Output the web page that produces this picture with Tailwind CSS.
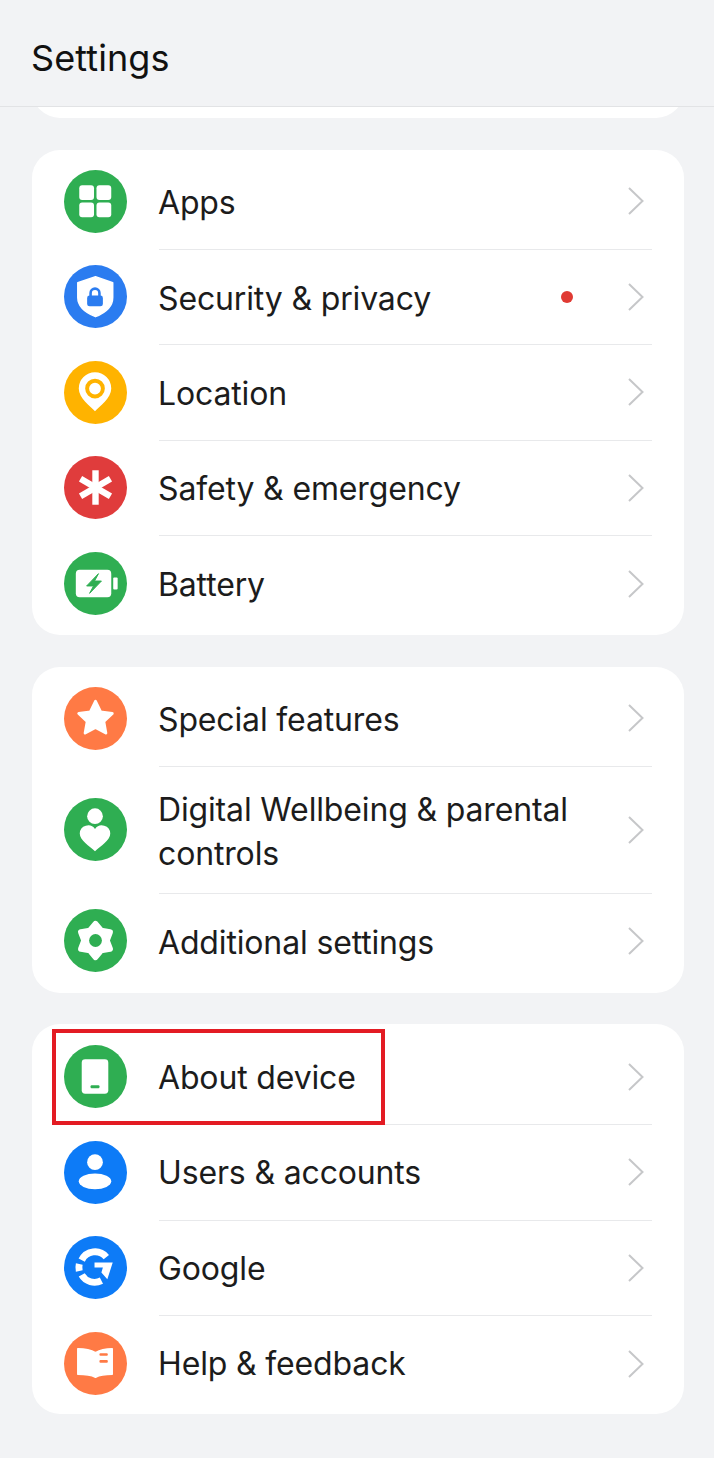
<!doctype html>
<html>
<head>
<meta charset="utf-8">
<script src="https://cdn.jsdelivr.net/npm/@tailwindcss/browser@4"></script>
</head>
<body class="relative w-[714px] h-[1458px] overflow-hidden bg-[#f2f3f5] font-['Inter',sans-serif] text-[#1c1c1c]">
<header class="h-[107px] border-b border-[#e2e3e5] pl-[31px] pt-[35px]">
  <h1 class="text-[36px] leading-[46px] font-normal tracking-[0.1px] text-[#111]">Settings</h1>
</header>
<div class="h-[11px] ml-[32px] mr-[30px] overflow-hidden flex items-end"><div class="w-full h-[60px] bg-white rounded-b-[28px]"></div></div>

<main class="mt-[32px] ml-[32px] mr-[30px] flex flex-col">
  <!-- card 1 -->
  <section class="bg-white rounded-[28px] pt-[4px] pb-[3px]">
    <div class="flex h-[95.5px] pl-[32px]">
      <div class="self-center w-[63px] h-[64px] shrink-0">
        <svg viewBox="0 0 64 64" class="w-[63px] h-[63px]"><circle cx="32" cy="32" r="32" fill="#2fae52"/><g fill="#fff"><rect x="15.5" y="15.5" width="15" height="15" rx="3"/><rect x="33" y="15.5" width="15" height="15" rx="3"/><rect x="15.5" y="33" width="15" height="15" rx="3"/><rect x="33" y="33" width="15" height="15" rx="3"/></g></svg>
      </div>
      <div class="flex-1 ml-[32px] mr-[32px] pr-[8px] flex items-center justify-between border-b border-[#e8e9eb]">
        <span class="text-[32px] leading-[44px] tracking-[-0.15px] -ml-[1px] pt-[4px]">Apps</span>
        <svg viewBox="0 0 16 28" class="w-[16px] h-[28px]"><path d="M1 1l13.500 13L1 27" fill="none" stroke="#c6c7c9" stroke-width="2"/></svg>
      </div>
    </div>
    <div class="flex h-[95.5px] pl-[32px]">
      <div class="self-center w-[63px] h-[64px] shrink-0">
        <svg viewBox="0 0 64 64" class="w-[63px] h-[63px]"><circle cx="32" cy="32" r="32" fill="#2b7cf0"/><path d="M32 12l17.500 6v15c0 9-7.500 15.500-17.500 19.500C22 48.500 14 42 14 33V18z" fill="#fff" stroke="#fff" stroke-width="1.500" stroke-linejoin="round"/><rect x="23.500" y="31" width="16" height="11" rx="2.500" fill="#2b7cf0"/><path d="M27 32v-3.500a4.500 4.500 0 0 1 9 0V32" fill="none" stroke="#2b7cf0" stroke-width="2.600"/></svg>
      </div>
      <div class="flex-1 ml-[32px] mr-[32px] pr-[8px] flex items-center border-b border-[#e8e9eb]">
        <span class="text-[32px] leading-[44px] tracking-[-0.15px] -ml-[1px] pt-[4px] flex-1">Security &amp; privacy</span>
        <span class="w-[12px] h-[12px] rounded-full bg-[#e03a33] mr-[55px]"></span>
        <svg viewBox="0 0 16 28" class="w-[16px] h-[28px]"><path d="M1 1l13.500 13L1 27" fill="none" stroke="#c6c7c9" stroke-width="2"/></svg>
      </div>
    </div>
    <div class="flex h-[95.5px] pl-[32px]">
      <div class="self-center w-[63px] h-[64px] shrink-0">
        <svg viewBox="0 0 64 64" class="w-[63px] h-[63px]"><circle cx="32" cy="32" r="32" fill="#ffb300"/><path d="M31.500 51C27 46 15 38 15 28a16.500 16.500 0 0 1 33 0c0 10-12 18-16.500 23z" fill="#fff"/><circle cx="31.500" cy="28" r="8" fill="none" stroke="#ffb300" stroke-width="4"/></svg>
      </div>
      <div class="flex-1 ml-[32px] mr-[32px] pr-[8px] flex items-center justify-between border-b border-[#e8e9eb]">
        <span class="text-[32px] leading-[44px] tracking-[-0.15px] -ml-[1px] pt-[4px]">Location</span>
        <svg viewBox="0 0 16 28" class="w-[16px] h-[28px]"><path d="M1 1l13.500 13L1 27" fill="none" stroke="#c6c7c9" stroke-width="2"/></svg>
      </div>
    </div>
    <div class="flex h-[95.5px] pl-[32px]">
      <div class="self-center w-[63px] h-[64px] shrink-0">
        <svg viewBox="0 0 64 64" class="w-[63px] h-[63px]"><circle cx="32" cy="32" r="32" fill="#e03c3c"/><g stroke="#fff" stroke-width="6.500"><path d="M32 14.500v35"/><path d="M16.800 23.200l30.400 17.600"/><path d="M47.200 23.200L16.800 40.800"/></g></svg>
      </div>
      <div class="flex-1 ml-[32px] mr-[32px] pr-[8px] flex items-center justify-between border-b border-[#e8e9eb]">
        <span class="text-[32px] leading-[44px] tracking-[-0.15px] -ml-[1px] pt-[3px]">Safety &amp; emergency</span>
        <svg viewBox="0 0 16 28" class="w-[16px] h-[28px]"><path d="M1 1l13.500 13L1 27" fill="none" stroke="#c6c7c9" stroke-width="2"/></svg>
      </div>
    </div>
    <div class="flex h-[95.5px] pl-[32px]">
      <div class="self-center w-[63px] h-[64px] shrink-0">
        <svg viewBox="0 0 64 64" class="w-[63px] h-[63px]"><circle cx="32" cy="32" r="32" fill="#2fae52"/><rect x="12" y="18" width="36" height="28" rx="4" fill="#fff"/><rect x="50" y="26" width="4.500" height="12" rx="1" fill="#fff"/><path d="M35 22L23 34.500h7L26 42l12-12.500h-7z" fill="#2fae52" stroke="#2fae52" stroke-width="1" stroke-linejoin="round"/></svg>
      </div>
      <div class="flex-1 ml-[32px] mr-[32px] pr-[8px] flex items-center justify-between">
        <span class="text-[32px] leading-[44px] tracking-[-0.15px] -ml-[1px] pt-[2px]">Battery</span>
        <svg viewBox="0 0 16 28" class="w-[16px] h-[28px]"><path d="M1 1l13.500 13L1 27" fill="none" stroke="#c6c7c9" stroke-width="2"/></svg>
      </div>
    </div>
  </section>

  <!-- card 2 -->
  <section class="mt-[32px] bg-white rounded-[28px] pt-[4px] pb-[4px]">
    <div class="flex h-[96px] pl-[32px]">
      <div class="self-center w-[63px] h-[64px] shrink-0">
        <svg viewBox="0 0 64 64" class="w-[63px] h-[63px]"><circle cx="32" cy="32" r="32" fill="#ff7a45"/><path d="M32 14.500l5.200 10.800 11.800 1.600-8.600 8.200 2.100 11.700L32 41.200l-10.500 5.600 2.100-11.700-8.600-8.200 11.800-1.600z" fill="#fff" stroke="#fff" stroke-width="3" stroke-linejoin="round"/></svg>
      </div>
      <div class="flex-1 ml-[32px] mr-[32px] pr-[8px] flex items-center justify-between border-b border-[#e8e9eb]">
        <span class="text-[32px] leading-[44px] tracking-[-0.15px] -ml-[1px] pt-[4px]">Special features</span>
        <svg viewBox="0 0 16 28" class="w-[16px] h-[28px]"><path d="M1 1l13.500 13L1 27" fill="none" stroke="#c6c7c9" stroke-width="2"/></svg>
      </div>
    </div>
    <div class="flex h-[127px] pl-[32px]">
      <div class="self-center w-[63px] h-[64px] shrink-0">
        <svg viewBox="0 0 64 64" class="w-[63px] h-[63px]"><circle cx="32" cy="32" r="32" fill="#2fae52"/><circle cx="31.500" cy="18.500" r="8" fill="#fff"/><path d="M31.500 54C26 49 16 43 16 36a8.500 8.500 0 0 1 15.500-4.500A8.500 8.500 0 0 1 47 36c0 7-10 13-15.500 18z" fill="#fff"/></svg>
      </div>
      <div class="flex-1 ml-[32px] mr-[32px] pr-[8px] flex items-center justify-between border-b border-[#e8e9eb]">
        <span class="text-[32px] leading-[44px] tracking-[-0.15px] -ml-[1px] pt-[4px] w-[430px]">Digital Wellbeing &amp; parental controls</span>
        <svg viewBox="0 0 16 28" class="w-[16px] h-[28px]"><path d="M1 1l13.500 13L1 27" fill="none" stroke="#c6c7c9" stroke-width="2"/></svg>
      </div>
    </div>
    <div class="flex h-[95px] pl-[32px]">
      <div class="self-center w-[63px] h-[64px] shrink-0">
        <svg viewBox="0 0 64 64" class="w-[63px] h-[63px]"><circle cx="32" cy="32" r="32" fill="#2fae52"/><path d="M32 15L37.750 22 46.700 23.500 43.500 32 46.700 40.500 37.750 42 32 49 26.250 42 17.300 40.500 20.500 32 17.300 23.500 26.250 22z" fill="#fff" stroke="#fff" stroke-width="6" stroke-linejoin="round"/><circle cx="32" cy="32" r="6.500" fill="#2fae52"/></svg>
      </div>
      <div class="flex-1 ml-[32px] mr-[32px] pr-[8px] flex items-center justify-between">
        <span class="text-[32px] leading-[44px] tracking-[-0.15px] -ml-[1px] pt-[3px]">Additional settings</span>
        <svg viewBox="0 0 16 28" class="w-[16px] h-[28px]"><path d="M1 1l13.500 13L1 27" fill="none" stroke="#c6c7c9" stroke-width="2"/></svg>
      </div>
    </div>
  </section>

  <!-- card 3 -->
  <section class="mt-[31px] bg-white rounded-[28px] pt-[6px] pb-[2px]">
    <div class="flex h-[95.500px] pl-[32px]">
      <div class="self-center w-[63px] h-[64px] shrink-0">
        <svg viewBox="0 0 64 64" class="w-[63px] h-[63px]"><circle cx="32" cy="32" r="32" fill="#2fae52"/><rect x="18" y="14.500" width="27" height="35" rx="3.500" fill="#fff"/><rect x="27" y="41" width="9" height="3" rx="1" fill="#2fae52"/></svg>
      </div>
      <div class="flex-1 ml-[32px] mr-[32px] pr-[8px] flex items-center justify-between border-b border-[#e8e9eb]">
        <span class="text-[32px] leading-[44px] tracking-[-0.15px] -ml-[1px] pt-[2px]">About device</span>
        <svg viewBox="0 0 16 28" class="w-[16px] h-[28px]"><path d="M1 1l13.500 13L1 27" fill="none" stroke="#c6c7c9" stroke-width="2"/></svg>
      </div>
    </div>
    <div class="flex h-[95.500px] pl-[32px]">
      <div class="self-center w-[63px] h-[64px] shrink-0">
        <svg viewBox="0 0 64 64" class="w-[63px] h-[63px]"><circle cx="32" cy="32" r="32" fill="#0d7bf7"/><circle cx="31.500" cy="21.500" r="8" fill="#fff"/><ellipse cx="31.500" cy="41" rx="16.500" ry="8" fill="#fff"/></svg>
      </div>
      <div class="flex-1 ml-[32px] mr-[32px] pr-[8px] flex items-center justify-between border-b border-[#e8e9eb]">
        <span class="text-[32px] leading-[44px] tracking-[-0.15px] -ml-[1px] pt-[2px]">Users &amp; accounts</span>
        <svg viewBox="0 0 16 28" class="w-[16px] h-[28px]"><path d="M1 1l13.500 13L1 27" fill="none" stroke="#c6c7c9" stroke-width="2"/></svg>
      </div>
    </div>
    <div class="flex h-[95.500px] pl-[32px]">
      <div class="self-center w-[63px] h-[64px] shrink-0">
        <svg viewBox="0 0 64 64" class="w-[63px] h-[63px]"><circle cx="32" cy="32" r="32" fill="#0d7bf7"/><g fill="none" stroke="#fff" stroke-width="7"><path d="M18 24.500A15 15 0 0 1 43 21.500"/><path d="M15.500 28.500a16 16 0 0 0 0 7"/><path d="M18 39.500A15 15 0 0 0 38 45.300"/></g><path d="M31 27h18.500L44 44l-6-7 1.500-5H31z" fill="#fff"/></svg>
      </div>
      <div class="flex-1 ml-[32px] mr-[32px] pr-[8px] flex items-center justify-between border-b border-[#e8e9eb]">
        <span class="text-[32px] leading-[44px] tracking-[-0.15px] -ml-[1px] pt-[2px]">Google</span>
        <svg viewBox="0 0 16 28" class="w-[16px] h-[28px]"><path d="M1 1l13.500 13L1 27" fill="none" stroke="#c6c7c9" stroke-width="2"/></svg>
      </div>
    </div>
    <div class="flex h-[95.500px] pl-[32px]">
      <div class="self-center w-[63px] h-[64px] shrink-0">
        <svg viewBox="0 0 64 64" class="w-[63px] h-[63px]"><circle cx="32" cy="32" r="32" fill="#ff7a45"/><path d="M14 17C20 17 27 18 32 21 37 18 43 17 49 17V43C43 43 37 43.500 32 46 27 43.500 20 43 14 43Z" fill="#fff" stroke="#fff" stroke-width="1.500" stroke-linejoin="round"/><rect x="36" y="21.500" width="8.500" height="2.500" rx="1" fill="#ff7a45"/><rect x="36" y="28.500" width="8.500" height="2.800" rx="1" fill="#ff7a45"/></svg>
      </div>
      <div class="flex-1 ml-[32px] mr-[32px] pr-[8px] flex items-center justify-between">
        <span class="text-[32px] leading-[44px] tracking-[-0.15px] -ml-[1px] pt-[1px]">Help &amp; feedback</span>
        <svg viewBox="0 0 16 28" class="w-[16px] h-[28px]"><path d="M1 1l13.500 13L1 27" fill="none" stroke="#c6c7c9" stroke-width="2"/></svg>
      </div>
    </div>
  </section>
</main>

<!-- annotation box -->
<div class="absolute left-[52px] top-[1029px] w-[333px] h-[96px] border-[4px] border-[#e31b23]"></div>
</body>
</html>
